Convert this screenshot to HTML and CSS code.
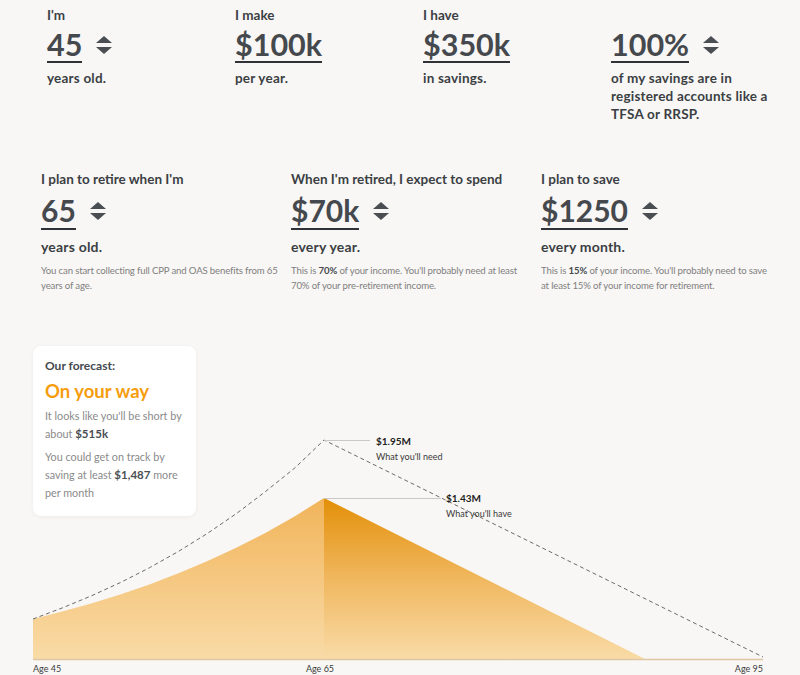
FILE: index.html
```html
<!DOCTYPE html>
<html lang="en">
<head>
<meta charset="utf-8">
<title>Retirement calculator</title>
<link rel="stylesheet" href="styles.css">
</head>
<body>
<div class="page">
  <section class="row row-top">
    <div class="field">
      <div class="label">I'm</div>
      <div class="value"><span class="num">45</span><span class="spin"><svg viewBox="0 0 16 18" width="16" height="18"><path d="M8 0 L16 7 L0 7 Z"/><path d="M0 11 L16 11 L8 18 Z"/></svg></span></div>
      <div class="suffix">years old.</div>
    </div>
    <div class="field">
      <div class="label">I make</div>
      <div class="value"><span class="num">$100k</span></div>
      <div class="suffix">per year.</div>
    </div>
    <div class="field">
      <div class="label">I have</div>
      <div class="value"><span class="num">$350k</span></div>
      <div class="suffix">in savings.</div>
    </div>
    <div class="field">
      <div class="label">&nbsp;</div>
      <div class="value"><span class="num">100%</span><span class="spin"><svg viewBox="0 0 16 18" width="16" height="18"><path d="M8 0 L16 7 L0 7 Z"/><path d="M0 11 L16 11 L8 18 Z"/></svg></span></div>
      <div class="suffix">of my savings are in registered accounts like a TFSA or RRSP.</div>
    </div>
  </section>

  <section class="row row-plan">
    <div class="field">
      <div class="label">I plan to retire when I'm</div>
      <div class="value"><span class="num">65</span><span class="spin"><svg viewBox="0 0 16 18" width="16" height="18"><path d="M8 0 L16 7 L0 7 Z"/><path d="M0 11 L16 11 L8 18 Z"/></svg></span></div>
      <div class="suffix">years old.</div>
      <p class="note note-wide">You can start collecting full CPP and OAS benefits from 65 years of age.</p>
    </div>
    <div class="field">
      <div class="label">When I'm retired, I expect to spend</div>
      <div class="value"><span class="num">$70k</span><span class="spin"><svg viewBox="0 0 16 18" width="16" height="18"><path d="M8 0 L16 7 L0 7 Z"/><path d="M0 11 L16 11 L8 18 Z"/></svg></span></div>
      <div class="suffix">every year.</div>
      <p class="note">This is <b>70%</b> of your income. You'll probably need at least 70% of your pre-retirement income.</p>
    </div>
    <div class="field">
      <div class="label">I plan to save</div>
      <div class="value"><span class="num">$1250</span><span class="spin"><svg viewBox="0 0 16 18" width="16" height="18"><path d="M8 0 L16 7 L0 7 Z"/><path d="M0 11 L16 11 L8 18 Z"/></svg></span></div>
      <div class="suffix">every month.</div>
      <p class="note">This is <b>15%</b> of your income. You'll probably need to save at least 15% of your income for retirement.</p>
    </div>
  </section>

  <section class="forecast">
    <svg class="chart" viewBox="0 0 800 345" width="800" height="345">
      <defs>
        <linearGradient id="gLeft" gradientUnits="userSpaceOnUse" x1="0" y1="168" x2="0" y2="329">
          <stop offset="0" stop-color="#f1b45a"/>
          <stop offset="1" stop-color="#f9dba7"/>
        </linearGradient>
        <linearGradient id="gRight" gradientUnits="userSpaceOnUse" x1="0" y1="168" x2="0" y2="329">
          <stop offset="0" stop-color="#e38f08"/>
          <stop offset="0.5" stop-color="#f0b75e"/>
          <stop offset="1" stop-color="#f9dba7"/>
        </linearGradient>
      </defs>
      <path fill="url(#gLeft)" d="M33 289 L62.1 281.6 L91.2 273.4 L120.3 264.4 L149.4 254.4 L178.5 243.3 L207.6 231.1 L236.7 217.6 L265.8 202.7 L294.9 186.2 L324 168 L324 329 L33 329 Z"/>
      <path fill="url(#gRight)" d="M324 168 L645 329 L324 329 Z"/>
      <line x1="33" y1="329.5" x2="763" y2="329.5" stroke="#dcc6a3" stroke-width="1.5"/>
      <polyline fill="none" stroke="#6b6b6b" stroke-width="1" stroke-dasharray="4 3" points="33,289 62.1,278 91.2,265.9 120.3,252.6 149.4,237.8 178.5,221.4 207.6,203.3 236.7,183.4 265.8,161.3 294.9,137.9 324,110 763,327"/>
      <line x1="324" y1="110.5" x2="370" y2="110.5" stroke="#c9c9c9" stroke-width="1"/>
      <line x1="324" y1="168.5" x2="441" y2="168.5" stroke="#c9c9c9" stroke-width="1"/>
      <text class="amt" x="376" y="115">$1.95M</text>
      <text class="amt-sub" x="376" y="130">What you'll need</text>
      <text class="amt" x="446" y="172">$1.43M</text>
      <text class="amt-sub" x="446" y="187">What you'll have</text>
      <text class="axis" x="33" y="342">Age 45</text>
      <text class="axis" x="320" y="342" text-anchor="middle">Age 65</text>
      <text class="axis" x="763" y="342" text-anchor="end">Age 95</text>
    </svg>
    <div class="card">
      <div class="card-title">Our forecast:</div>
      <div class="card-status">On your way</div>
      <p class="card-text">It looks like you'll be short by about <b>$515k</b></p>
      <p class="card-text">You could get on track by saving at least <b>$1,487</b> more per month</p>
    </div>
  </section>
</div>
</body>
</html>
```

FILE: styles.css
```css
* { box-sizing: border-box; }
html, body {
  margin: 0;
  padding: 0;
  background: #f8f7f5;
}
body {
  font-family: Lato, "Noto Sans", sans-serif;
  color: #3f4347;
  width: 800px;
  height: 675px;
  overflow: hidden;
}
.page {
  width: 800px;
}
.row {
  display: grid;
}
.row-top {
  grid-template-columns: repeat(4, 188px);
  padding: 6px 0 0 47px;
  height: 170px;
}
.row-plan {
  grid-template-columns: repeat(3, 250px);
  padding: 0 0 0 41px;
  height: 160px;
}
.label {
  font-size: 13.5px;
  font-weight: 700;
  line-height: 18px;
  color: #3b3f44;
}
.value {
  display: flex;
  align-items: center;
  gap: 14px;
  margin-top: 5px;
}
.num {
  font-size: 30.5px;
  font-weight: 700;
  line-height: 30px;
  color: #45494e;
  border-bottom: 2px solid #2f3337;
  padding-bottom: 2px;
}
.spin {
  display: flex;
  margin-top: -2px;
}
.spin svg path { fill: #4a4e53; }
.suffix {
  font-size: 13.5px;
  font-weight: 700;
  line-height: 18px;
  letter-spacing: 0.2px;
  margin-top: 6px;
  color: #3b3f44;
  width: 165px;
}
.row-plan .label { font-size: 13.5px; }
.row-plan .value { margin-top: 6px; }
.row-plan .num { font-size: 30px; line-height: 32px; }
.row-plan .suffix { font-size: 14px; width: auto; margin-top: 8px; }
.note {
  margin: 7px 0 0;
  font-size: 9.6px;
  letter-spacing: -0.15px;
  line-height: 15px;
  font-weight: 400;
  color: #808080;
  width: 230px;
}
.note-wide { width: 242px; }
.note b { color: #45494e; font-weight: 700; }

.forecast {
  position: relative;
  height: 345px;
  padding-top: 16px;
}
.chart {
  position: absolute;
  left: 0;
  top: 0;
}
.card {
  position: relative;
  margin: 0 0 0 33px;
  width: 163px;
  padding: 12px 8px 14px 12px;
  background: #ffffff;
  border-radius: 8px;
  box-shadow: 0 1px 4px rgba(0,0,0,0.05);
}
.card-title {
  font-size: 12px;
  font-weight: 700;
  line-height: 16px;
  color: #45494e;
}
.card-status {
  font-size: 18.5px;
  font-weight: 700;
  line-height: 22px;
  color: #f59d0e;
  margin-top: 6px;
}
.card-text {
  margin: 5px 0 0;
  font-size: 10.8px;
  line-height: 18px;
  color: #8a8a8a;
}
.card-text + .card-text { margin-top: 5px; }
.card-text b { color: #4a4e53; font-weight: 700; font-size: 11.5px; }
.amt {
  font-family: Lato, sans-serif;
  font-size: 10px;
  font-weight: 700;
  fill: #1f1f1f;
}
.amt-sub {
  font-family: Lato, sans-serif;
  font-size: 9px;
  fill: #3a3a3a;
}
.axis {
  font-family: Lato, sans-serif;
  font-size: 9px;
  fill: #3a3a3a;
}
```
